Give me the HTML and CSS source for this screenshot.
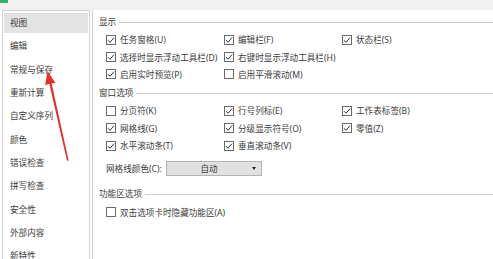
FILE: index.html
```html
<!DOCTYPE html>
<html lang="zh-CN">
<head>
<meta charset="utf-8">
<title>选项</title>
<link rel="stylesheet" href="styles.css">
</head>
<body>
<div class="topbar"><span class="accent"></span></div>
<div class="main">
  <nav class="sidebar">
    <div class="nav-item selected">视图</div>
    <div class="nav-item">编辑</div>
    <div class="nav-item">常规与保存</div>
    <div class="nav-item">重新计算</div>
    <div class="nav-item">自定义序列</div>
    <div class="nav-item">颜色</div>
    <div class="nav-item">错误检查</div>
    <div class="nav-item">拼写检查</div>
    <div class="nav-item">安全性</div>
    <div class="nav-item">外部内容</div>
    <div class="nav-item">新特性</div>
  </nav>
  <section class="content">
    <div class="group-title"><span>显示</span></div>
    <div class="opts">
      <label class="opt"><span class="cb on"></span>任务窗格(U)</label>
      <label class="opt"><span class="cb on"></span>编辑栏(F)</label>
      <label class="opt"><span class="cb on"></span>状态栏(S)</label>
      <label class="opt"><span class="cb on"></span>选择时显示浮动工具栏(D)</label>
      <label class="opt wide"><span class="cb on"></span>右键时显示浮动工具栏(H)</label>
      <label class="opt"><span class="cb on"></span>启用实时预览(P)</label>
      <label class="opt wide"><span class="cb"></span>启用平滑滚动(M)</label>
    </div>
    <div class="group-title second"><span>窗口选项</span></div>
    <div class="opts">
      <label class="opt"><span class="cb"></span>分页符(K)</label>
      <label class="opt"><span class="cb on"></span>行号列标(E)</label>
      <label class="opt"><span class="cb on"></span>工作表标签(B)</label>
      <label class="opt"><span class="cb on"></span>网格线(G)</label>
      <label class="opt"><span class="cb on"></span>分级显示符号(O)</label>
      <label class="opt"><span class="cb on"></span>零值(Z)</label>
      <label class="opt"><span class="cb on"></span>水平滚动条(T)</label>
      <label class="opt wide"><span class="cb on"></span>垂直滚动条(V)</label>
    </div>
    <div class="color-row">
      <span class="color-label">网格线颜色(C):</span>
      <div class="select"><span class="select-text">自动</span><span class="caret"></span></div>
    </div>
    <div class="group-title third"><span>功能区选项</span></div>
    <div class="opts">
      <label class="opt full"><span class="cb"></span>双击选项卡时隐藏功能区(A)</label>
    </div>
  </section>
</div>
<svg class="arrow" width="493" height="259" viewBox="0 0 493 259">
  <polygon points="47.5,71 55.5,83 51.6,83.3 68.6,160.5 67,160.8 49.3,83.8 45.2,85.2" fill="#e5302a"/>
</svg>
</body>
</html>
```

FILE: styles.css
```css
* { box-sizing: border-box; }
html, body {
  margin: 0;
  padding: 0;
}
body {
  width: 493px;
  height: 259px;
  overflow: hidden;
  position: relative;
  background: #ffffff;
  font-family: "Noto Sans", "Noto Sans CJK SC", sans-serif;
  font-size: 8.6px;
  color: #3c3c3c;
}
.topbar {
  height: 10px;
  background: #f1f1f1;
  display: flex;
}
.accent {
  width: 8px;
  height: 3px;
  background: #2fb36a;
}
.main {
  display: flex;
  height: 249px;
}
.sidebar {
  width: 88px;
  margin-left: 2px;
  border: 1px solid #d2d2d2;
  border-bottom: none;
  padding: 2px 1px 0 1px;
  display: flex;
  flex-direction: column;
  gap: 3.33px;
}
.nav-item {
  height: 20px;
  line-height: 20px;
  padding-left: 6px;
  white-space: nowrap;
  flex: none;
}
.nav-item.selected {
  background: #e3e3e3;
}
.content {
  flex: 1;
  margin-left: 2px;
  border-left: 1px solid #d2d2d2;
  padding: 4px 0 0 6px;
  display: flex;
  flex-direction: column;
}
.group-title {
  display: flex;
  align-items: center;
  height: 16px;
  line-height: 16px;
}
.group-title::after {
  content: "";
  flex: 1;
  height: 1px;
  background: #cfcfcf;
  margin-left: 3px;
}
.group-title.second { margin-top: 2px; }
.group-title.third { margin-top: 10px; }
.opts {
  display: grid;
  grid-template-columns: 118px 118px auto;
  padding-left: 7px;
  margin-top: 1px;
}
.opt {
  display: flex;
  align-items: center;
  height: 17.4px;
  white-space: nowrap;
}
.opt.wide { grid-column: span 2; }
.opt.full { grid-column: 1 / -1; }
.cb {
  width: 10px;
  height: 10px;
  border: 1px solid #6a6a6a;
  margin-right: 4px;
  flex: none;
  background: #fff;
}
.cb.on {
  background: #fff url("data:image/svg+xml;utf8,<svg xmlns='http://www.w3.org/2000/svg' width='8' height='8' viewBox='0 0 8 8'><path d='M1 4.2 L3.1 6.3 L7 1.6' fill='none' stroke='%23333' stroke-width='1'/></svg>") no-repeat center;
}
.color-row {
  display: flex;
  align-items: center;
  margin-top: 7px;
  padding-left: 7px;
  height: 15px;
}
.color-label {
  width: 60px;
  white-space: nowrap;
}
.select {
  width: 96px;
  height: 15px;
  background: #e1e1e1;
  border: 1px solid #b4b4b4;
  display: flex;
  align-items: center;
  padding-right: 10px;
  position: relative;
}
.select-text {
  flex: 1;
  text-align: center;
}
.caret {
  position: absolute;
  right: 5px;
  top: 5px;
  width: 0;
  height: 0;
  border-left: 2.5px solid transparent;
  border-right: 2.5px solid transparent;
  border-top: 3px solid #222;
}
.arrow {
  position: absolute;
  left: 0;
  top: 0;
  pointer-events: none;
}
```
